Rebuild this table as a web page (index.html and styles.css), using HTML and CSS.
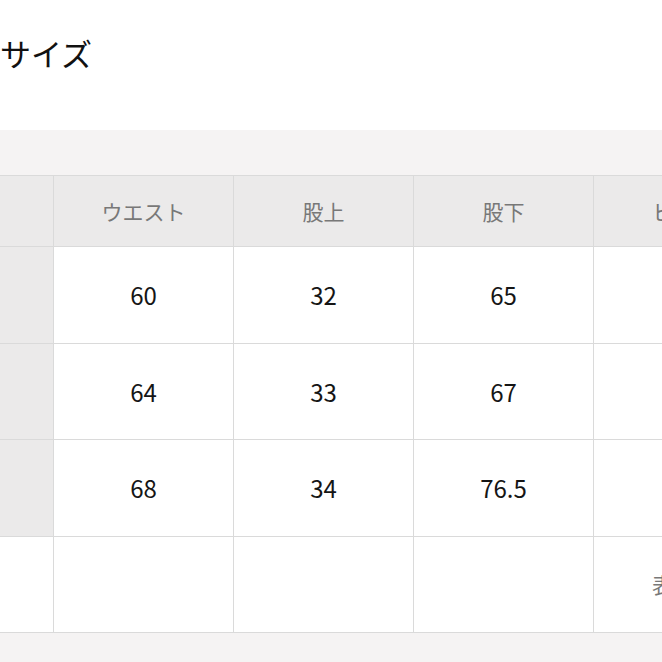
FILE: index.html
```html
<!DOCTYPE html>
<html lang="ja">
<head>
<meta charset="utf-8">
<title>サイズ</title>
<link rel="stylesheet" href="styles.css">
</head>
<body>
<div class="page">
  <header class="title-block">
    <h1 class="title">サイズ</h1>
  </header>
  <section class="table-wrap">
    <table class="size-table">
      <thead>
        <tr>
          <th class="label"></th>
          <th>ウエスト</th>
          <th>股上</th>
          <th>股下</th>
          <th>ヒップ</th>
        </tr>
      </thead>
      <tbody>
        <tr>
          <td class="label">S</td>
          <td>60</td>
          <td>32</td>
          <td>65</td>
          <td>88</td>
        </tr>
        <tr>
          <td class="label">M</td>
          <td>64</td>
          <td>33</td>
          <td>67</td>
          <td>92</td>
        </tr>
        <tr>
          <td class="label">L</td>
          <td>68</td>
          <td>34</td>
          <td>76.5</td>
          <td>96</td>
        </tr>
        <tr class="note-row">
          <td class="label-empty"></td>
          <td></td>
          <td></td>
          <td></td>
          <td class="note">表記値</td>
        </tr>
      </tbody>
    </table>
  </section>
</div>
</body>
</html>
```
FILE: styles.css
```css
html, body {
  margin: 0;
  padding: 0;
  background: #ffffff;
}
body {
  font-family: "Noto Sans CJK JP", "Noto Sans", sans-serif;
  color: #111111;
  overflow: hidden;
}
.page {
  width: 662px;
  height: 662px;
  overflow: hidden;
}
.title-block {
  height: 130px;
  box-sizing: border-box;
  padding-top: 35px;
}
.title {
  margin: 0;
  font-size: 31px;
  line-height: 36px;
  font-weight: 400;
  color: #111111;
}
.table-wrap {
  background: #f5f3f3;
  padding: 45px 0 40px;
  overflow: hidden;
}
.size-table {
  border-collapse: collapse;
  table-layout: fixed;
  width: 900px;
  margin-left: -127px;
}
.size-table th,
.size-table td {
  width: 179px;
  border: 1px solid #dadada;
  text-align: center;
  vertical-align: middle;
  padding: 0;
  font-weight: 400;
}
.size-table th {
  height: 70px;
  background: #ebeaea;
  color: #787878;
  font-size: 21px;
}
.size-table td {
  height: 95.5px;
  background: #ffffff;
  font-size: 24px;
  color: #151515;
}
.size-table td.label {
  background: #ebeaea;
}
.size-table td.note {
  font-size: 21px;
  color: #787878;
}
```
